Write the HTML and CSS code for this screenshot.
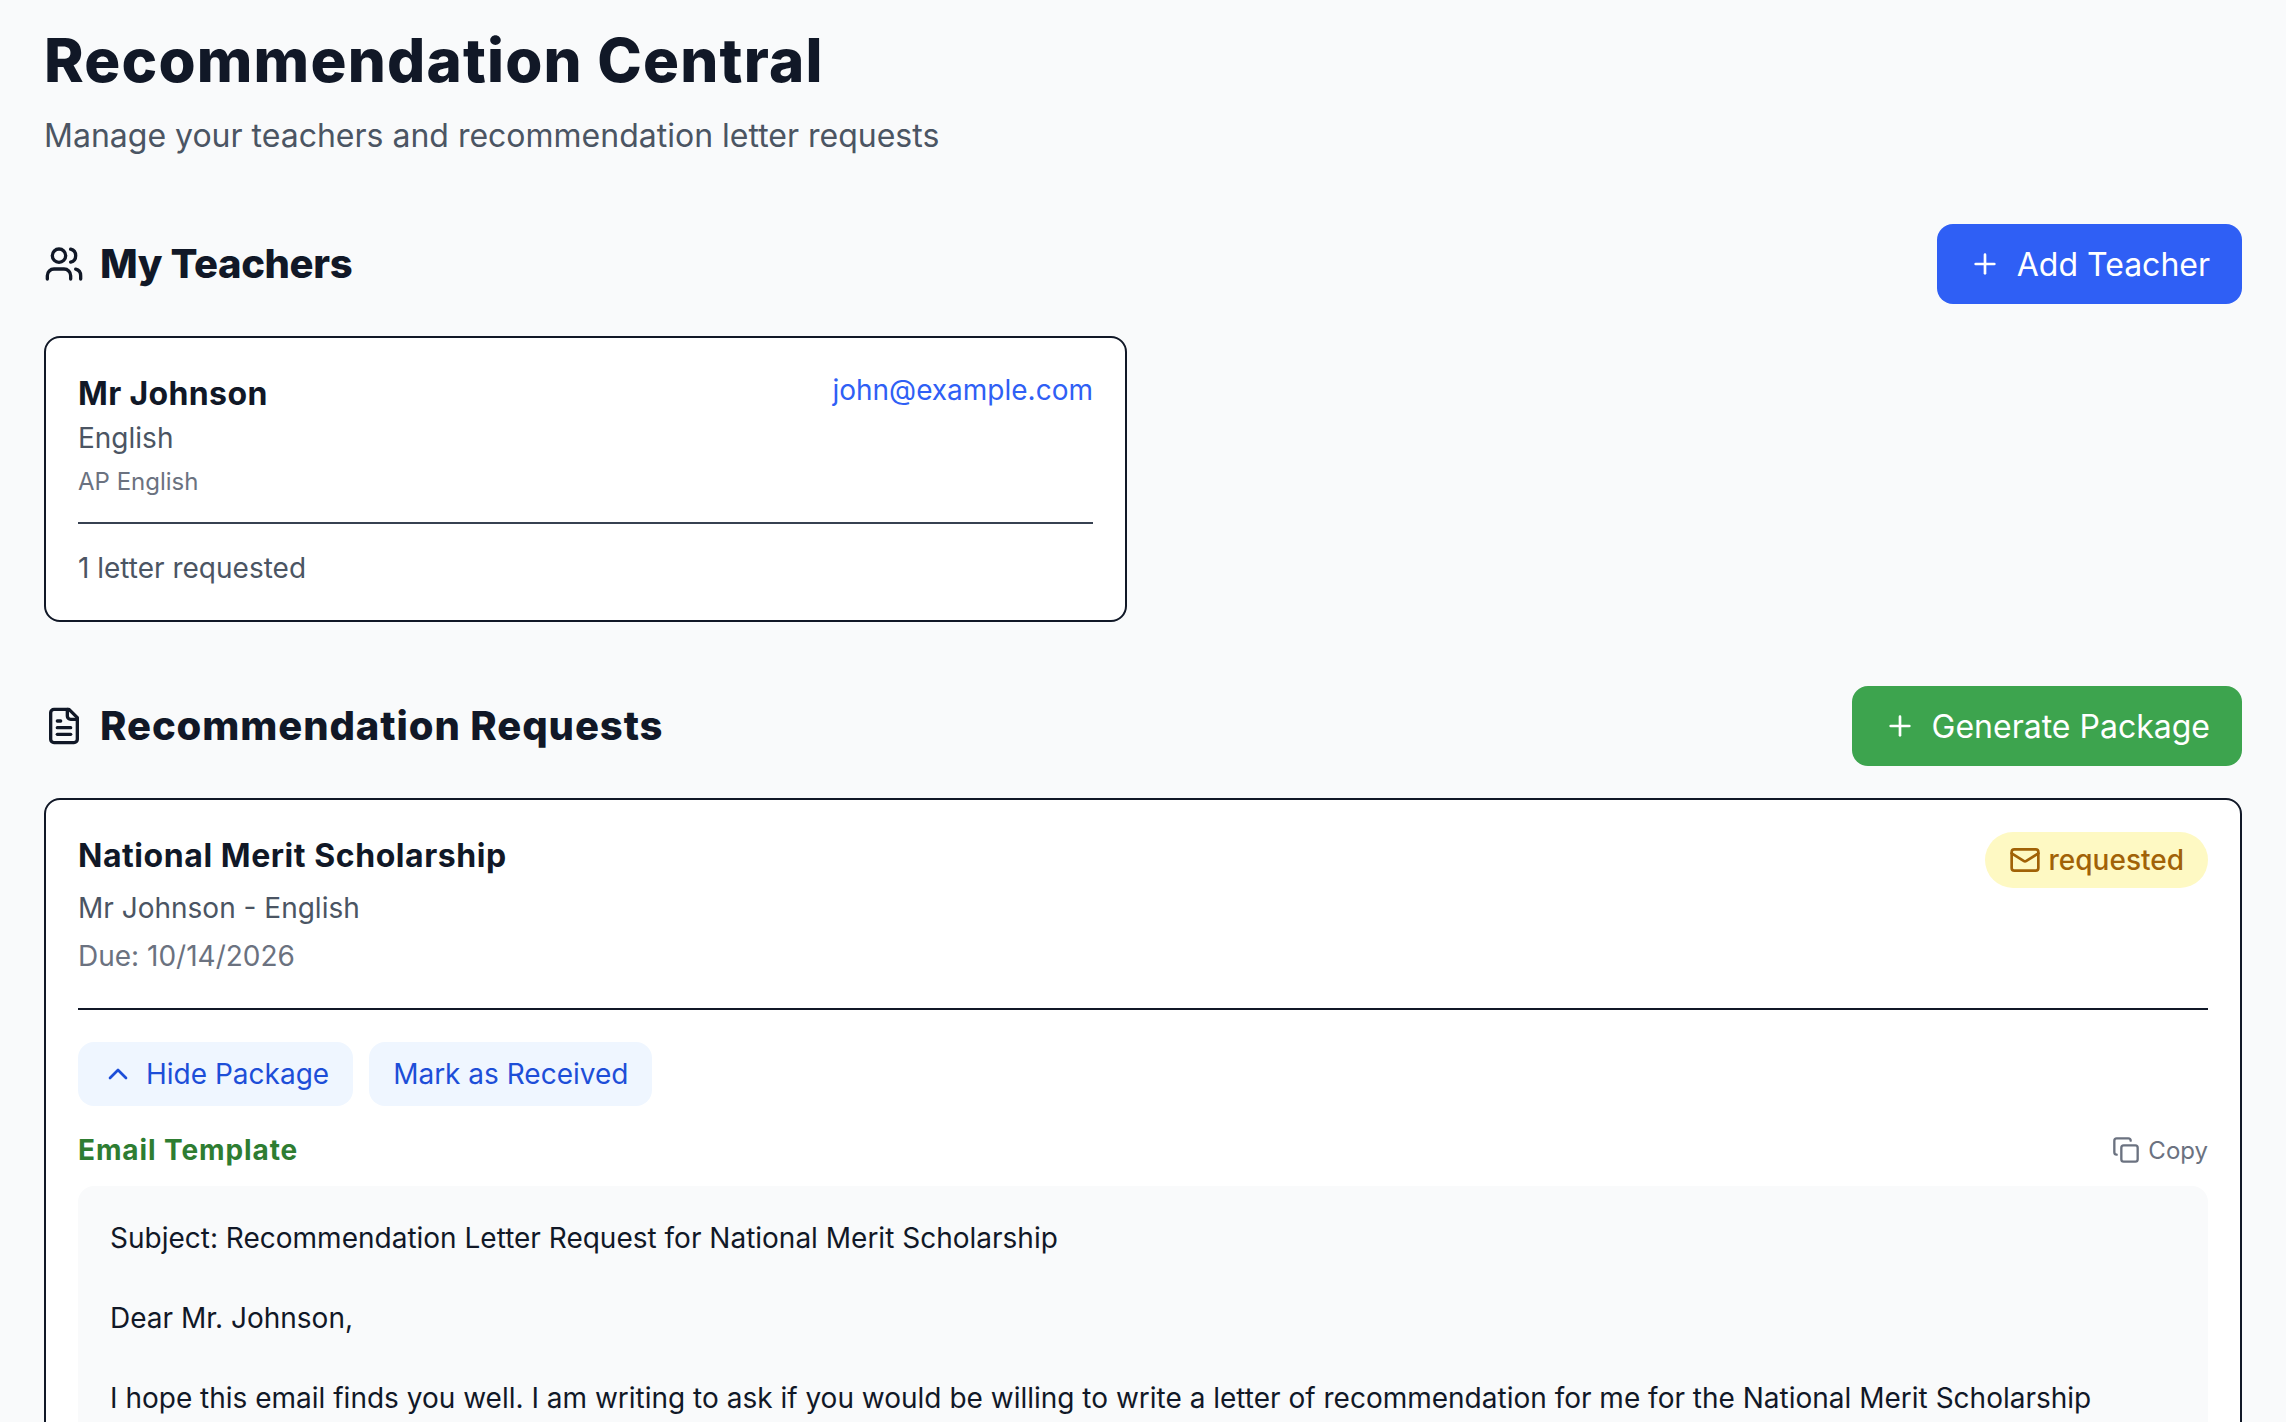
FILE: index.html
```html
<!DOCTYPE html>
<html lang="en">
  <head>
    <meta charset="UTF-8" />
    <meta name="viewport" content="width=device-width, initial-scale=1.0" />
    <title>Recommendation Central</title>
    <link rel="stylesheet" href="styles.css">
  </head>
  <body>
    <main class="page">
      <header class="page-header">
        <h1 class="page-title">Recommendation Central</h1>
        <p class="page-subtitle">Manage your teachers and recommendation letter requests</p>
      </header>

      <section class="section">
        <div class="section-header">
          <h2 class="section-title">
            <svg class="icon icon-section" viewBox="0 0 24 24">
              <path d="M16 21v-2a4 4 0 0 0-4-4H6a4 4 0 0 0-4 4v2"></path>
              <circle cx="9" cy="7" r="4"></circle>
              <path d="M22 21v-2a4 4 0 0 0-3-3.87"></path>
              <path d="M16 3.13a4 4 0 0 1 0 7.75"></path>
            </svg>
            My Teachers
          </h2>
          <button class="btn btn-blue">
            <svg class="icon icon-btn" viewBox="0 0 24 24"><path d="M5 12h14"></path><path d="M12 5v14"></path></svg>
            Add Teacher
          </button>
        </div>

        <div class="teacher-grid">
          <div class="card">
            <div class="teacher-top">
              <div>
                <h3 class="card-name teacher-name">Mr Johnson</h3>
                <p class="text-muted">English</p>
                <p class="text-small">AP English</p>
              </div>
              <span class="teacher-email">john@example.com</span>
            </div>
            <div class="teacher-foot">1 letter requested</div>
          </div>
        </div>
      </section>

      <section class="section">
        <div class="section-header">
          <h2 class="section-title section-title-wide">
            <svg class="icon icon-section" viewBox="0 0 24 24">
              <path d="M15 2H6a2 2 0 0 0-2 2v16a2 2 0 0 0 2 2h12a2 2 0 0 0 2-2V7Z"></path>
              <path d="M14 2v4a2 2 0 0 0 2 2h4"></path>
              <path d="M10 9H8"></path>
              <path d="M16 13H8"></path>
              <path d="M16 17H8"></path>
            </svg>
            Recommendation Requests
          </h2>
          <button class="btn btn-green">
            <svg class="icon icon-btn" viewBox="0 0 24 24"><path d="M5 12h14"></path><path d="M12 5v14"></path></svg>
            Generate Package
          </button>
        </div>

        <div class="card">
          <div class="request-top">
            <div>
              <h3 class="card-name request-name">National Merit Scholarship</h3>
              <p class="text-muted request-line">Mr Johnson - English</p>
              <p class="text-due request-line">Due: 10/14/2026</p>
            </div>
            <span class="badge">
              <svg class="icon icon-btn" viewBox="0 0 24 24">
                <rect x="2" y="4" width="20" height="16" rx="2"></rect>
                <path d="m22 7-8.97 5.7a1.94 1.94 0 0 1-2.06 0L2 7"></path>
              </svg>
              requested
            </span>
          </div>

          <div class="request-actions">
            <button class="btn-soft">
              <svg class="icon icon-btn" viewBox="0 0 24 24"><path d="m18 15-6-6-6 6"></path></svg>
              Hide Package
            </button>
            <button class="btn-soft">Mark as Received</button>
          </div>

          <div class="template-header">
            <h4 class="template-title">Email Template</h4>
            <span class="copy-link">
              <svg class="icon icon-copy" viewBox="0 0 24 24">
                <rect x="8" y="8" width="14" height="14" rx="2"></rect>
                <path d="M4 16c-1.1 0-2-.9-2-2V4c0-1.1.9-2 2-2h10c1.1 0 2 .9 2 2"></path>
              </svg>
              Copy
            </span>
          </div>
          <div class="template-box">Subject: Recommendation Letter Request for National Merit Scholarship

Dear Mr. Johnson,

I hope this email finds you well. I am writing to ask if you would be willing to write a letter of recommendation for me for the National Merit Scholarship</div>
        </div>
      </section>
    </main>
  </body>
</html>
```

FILE: styles.css
```css
* {
  box-sizing: border-box;
}

html,
body {
  margin: 0;
  height: 1422px;
  overflow: hidden;
}

body {
  background: #f9fafb;
  color: #111827;
  font-family: Inter, "Liberation Sans", sans-serif;
}

h1,
h2,
h3,
h4,
p {
  margin: 0;
}

.page {
  padding: 24px 44px 0 44px;
}

/* heading */
.page-header {
  margin-bottom: 64px;
}

.page-title {
  font-size: 60px;
  line-height: 72px;
  font-weight: 800;
  letter-spacing: 1.2px;
}

.page-subtitle {
  margin-top: 16px;
  font-size: 32px;
  line-height: 48px;
  color: #4b5563;
}

.section {
  margin-bottom: 64px;
}

.section-header {
  display: flex;
  justify-content: space-between;
  align-items: center;
  margin-bottom: 32px;
}

.section-title {
  display: flex;
  align-items: center;
  gap: 16px;
  font-size: 40px;
  line-height: 56px;
  font-weight: 800;
  letter-spacing: -0.4px;
}

.section-title-wide {
  letter-spacing: 0.9px;
}

/* icons */
.icon {
  fill: none;
  stroke: currentColor;
  stroke-width: 2;
  stroke-linecap: round;
  stroke-linejoin: round;
  flex: none;
}

.icon-section {
  width: 40px;
  height: 40px;
}

.icon-btn {
  width: 32px;
  height: 32px;
}

.icon-copy {
  width: 28px;
  height: 28px;
}

/* buttons */
.btn {
  display: flex;
  align-items: center;
  gap: 16px;
  height: 80px;
  padding: 0 32px;
  border: 0;
  border-radius: 16px;
  color: #fff;
  font-family: inherit;
  font-size: 32px;
}

.btn-blue {
  background: #2f5ff5;
}

.btn-green {
  background: #3da44e;
}

.btn-soft {
  display: flex;
  align-items: center;
  gap: 12px;
  height: 64px;
  padding: 0 24px;
  border: 0;
  border-radius: 16px;
  background: #eff6ff;
  color: #1d4ed8;
  font-family: inherit;
  font-size: 28px;
}

/* cards */
.teacher-grid {
  display: grid;
  grid-template-columns: 1fr 1fr;
  gap: 32px;
}

.card {
  background: #fff;
  border: 2px solid #111827;
  border-radius: 16px;
  padding: 32px;
}

.card-name {
  font-size: 32px;
  line-height: 48px;
  font-weight: 700;
}

.teacher-name {
  letter-spacing: 0.36px;
}

.request-name {
  letter-spacing: 0.56px;
}

.text-muted {
  font-size: 28px;
  line-height: 40px;
  color: #4b5563;
}

.text-small {
  margin-top: 8px;
  font-size: 24px;
  line-height: 32px;
  color: #6b7280;
}

.teacher-top {
  display: flex;
  justify-content: space-between;
  align-items: flex-start;
}

.teacher-email {
  font-size: 28px;
  line-height: 40px;
  color: #2f5ff5;
}

.teacher-foot {
  margin-top: 24px;
  padding-top: 24px;
  border-top: 2px solid #374151;
  font-size: 28px;
  line-height: 40px;
  color: #4b5563;
}

/* request */
.request-top {
  display: flex;
  justify-content: space-between;
  align-items: flex-start;
  padding-bottom: 32px;
  border-bottom: 2px solid #111827;
}

.request-line {
  margin-top: 8px;
}

.text-due {
  font-size: 28px;
  line-height: 40px;
  color: #6b7280;
}

.badge {
  display: flex;
  align-items: center;
  gap: 8px;
  padding: 8px 24px;
  border-radius: 28px;
  background: #fef9c3;
  color: #a16207;
  font-size: 28px;
  line-height: 40px;
  font-weight: 500;
}

.request-actions {
  display: flex;
  gap: 16px;
  margin-top: 32px;
}

.template-header {
  display: flex;
  justify-content: space-between;
  align-items: center;
  margin-top: 24px;
  margin-bottom: 16px;
}

.template-title {
  font-size: 28px;
  line-height: 40px;
  font-weight: 700;
  letter-spacing: 0.9px;
  color: #2e7d32;
}

.copy-link {
  display: flex;
  align-items: center;
  gap: 8px;
  font-size: 24px;
  color: #6b7280;
}

.template-box {
  padding: 32px;
  border-radius: 16px;
  background: #f9fafb;
  font-size: 28px;
  line-height: 40px;
  white-space: pre-wrap;
}
```
